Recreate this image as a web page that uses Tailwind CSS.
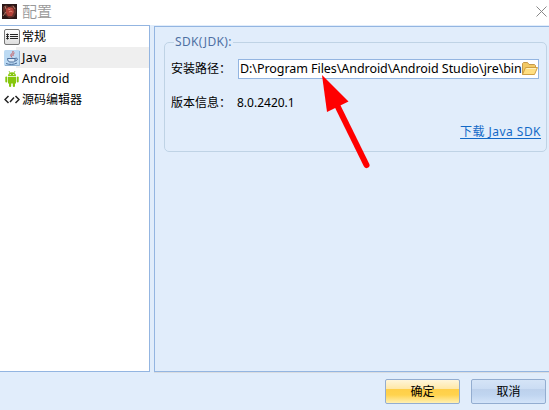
<!DOCTYPE html>
<html lang="zh-CN">
<head>
<meta charset="utf-8">
<title>配置</title>
<script src="https://cdn.jsdelivr.net/npm/@tailwindcss/browser@4"></script>
</head>
<body class="w-[549px] h-[410px] overflow-hidden bg-[#e1edfb] text-black text-[13px] leading-[20px] whitespace-nowrap font-['Noto_Sans','Noto_Sans_CJK_SC',sans-serif] flex flex-col">
<header class="h-[25px] shrink-0 bg-white flex items-center pl-[2px] pr-[2px]">
  <svg class="w-[15px] h-[15px] mb-[3px]" viewBox="0 0 15 15">
    <rect width="15" height="15" fill="#2a1717"/>
    <path d="M1 3l3-2 3 2 4-2 3 3v5l-2 4-5 1-4-3-2-4z" fill="#62302a"/>
    <path d="M4 5l3-2 4 1 1 4-2 4-4 0-2-3z" fill="#b34038"/>
    <path d="M6 5l2 .5 1-1M7 8l2-1 1.500 1" stroke="#e58a75" fill="none"/>
    <path d="M1 12l3-4M11 2l2 3M3 2l1 3" stroke="#a77867" fill="none"/>
  </svg>
  <h1 class="ml-[5px] mb-[4px] text-[15px] font-[350] text-[#999]">配置</h1>
  <svg class="ml-auto mb-[3px] w-[11px] h-[11px]" viewBox="0 0 11 11"><path d="M.5.5l10 10M10.5.5l-10 10" stroke="#888" fill="none"/></svg>
</header>
<main class="h-[347px] shrink-0 flex">
  <nav class="w-[150px] shrink-0 bg-white border border-l-0 border-[#93b5e1]">
    <div class="h-[21px] flex items-center pl-[4px] gap-[2px]">
      <svg class="w-4 h-4" viewBox="0 0 16 16"><defs><linearGradient id="g" x2="0" y2="1"><stop stop-color="#fff"/><stop offset="1" stop-color="#ddd"/></linearGradient></defs><rect x=".5" y=".5" width="15" height="15" rx="1.500" fill="url(#g)" stroke="#777"/><path d="M6 5.500h8M6 7.500h8M6 9.500h8" stroke="#222"/><path d="M2 5.500h3M2 7.500h3M2 9.500h3" stroke="#444"/><path d="M3.500 4.500v6" stroke="#222"/></svg>
      <span class="text-[12px]">常规</span>
    </div>
    <div class="h-[21px] flex items-center pl-[4px] bg-[linear-gradient(to_right,white_16px,#efefef_16px)]">
      <svg class="w-4 h-4" viewBox="0 0 16 16"><rect width="16" height="16" rx="1.5" fill="#bcdaf3"/><path d="M15.500 1v14.500H1" fill="none" stroke="#90b3d3"/><path d="M9 1c1 2-3 3-2 5 .2.800 1 1 1 1.500M10.500 3c-2 1-1.500 2-1.500 3" fill="none" stroke="#c84c4c"/><path d="M3.500 8.500h7.500v1.500c0 1.500-1 2-2 2H6c-1.500 0-2.500-1.500-2.500-3.500z" fill="#dcebfa" stroke="#4c6f9b"/><path d="M11 8.500c2-1 3 .500 2 1.500s-2 1-2 1M2 13.500c3 1.300 8 1.300 11-.5" fill="none" stroke="#4c6f9b"/></svg>
      <span class="ml-[2px] text-[12.500px] tracking-[.35px]">Java</span>
    </div>
    <div class="h-[21px] flex items-center pl-[4px] gap-[2px]">
      <svg class="w-4 h-4" viewBox="0 0 16 16"><g fill="#86c70c"><path d="M4 5c0-5 8-5 8 0zM4 5.800h8V12.500H4z"/><rect x="1.300" y="5.500" width="2" height="6" rx="1"/><rect x="12.700" y="5.500" width="2" height="6" rx="1"/><rect x="5" y="11" width="2.200" height="5" rx="1"/><rect x="8.800" y="11" width="2.200" height="5" rx="1"/></g><path d="M5 0l1 2M11 0l-1 2" stroke="#86c70c" stroke-width=".8"/><circle cx="6.300" cy="3.500" r=".6" fill="#fff"/><circle cx="9.700" cy="3.500" r=".6" fill="#fff"/></svg>
      <span class="text-[12.500px] tracking-[.1px]">Android</span>
    </div>
    <div class="h-[21px] flex items-center pl-[4px] gap-[2px]">
      <svg class="w-4 h-4" viewBox="0 0 16 16"><path d="M4.500 4L1 7.500 4.500 11M11.500 4L15 7.500 11.500 11M10 5.500l-4 4.500" stroke="#222" stroke-width="1.500" fill="none"/></svg>
      <span class="text-[12px]">源码编辑器</span>
    </div>
  </nav>
  <section class="ml-[4px] mt-px flex-1 border-l border-y border-[#93b5e1] shadow-[0_1px_0_#d9dce0] pl-[9px]">
    <fieldset class="mt-[6px] w-[383px] h-[119px] border border-[#bfd3e5] rounded-[5px]">
      <legend class="ml-[9px] h-[19px] px-px text-[12px] tracking-[.35px] leading-[18px] text-[#4f70a3]">SDK(JDK):</legend>
      <div class="flex items-center pl-[6px] h-[20px] mt-[7px]">
        <label class="w-[67px] text-[12px]">安装路径：</label>
        <div class="w-[301px] h-[20px] border border-[#93b5e1] bg-white flex items-center pl-[1px]">
          <span class="w-[282px] overflow-hidden text-[12.500px] tracking-[-.06px]">D:\Program Files\Android\Android Studio\jre\bin</span>
          <svg class="w-4 h-4 shrink-0" viewBox="0 0 16 16"><path d="M.500 13.500v-11l1-1h4l1.500 2h5.500l1 1V7" fill="#f2c964" stroke="#c69a4d"/><path d="M.500 13.500L3.500 6.500h12l-3 7z" fill="#ffdf82" stroke="#d0a044"/><path d="M4.500 7.500h9.500" stroke="#fff2bd"/></svg>
        </div>
      </div>
      <div class="flex items-center pl-[6px] h-[20px] mt-[14px]">
        <span class="w-[66px] text-[12px]">版本信息：</span><span class="text-[12px]">8.0.2420.1</span>
      </div>
      <div class="flex justify-end pr-[5px] mt-[10px]"><a class="text-[12px] tracking-[.46px] leading-[17px] h-[15px] text-[#1269c7] underline underline-offset-2">下载 Java SDK</a></div>
    </fieldset>
  </section>
</main>
<footer class="flex-1 flex justify-end pt-[7px] pr-[3px] gap-[11px]">
  <button class="w-[75px] h-[25px] rounded-[2px] border border-[#93add0] text-[12px] bg-[linear-gradient(#fff5d9_0%,#ffe7a5_40%,#ffcf48_41%,#ffd34e_65%,#fff0b3_100%)]">确定</button>
  <button class="w-[75px] h-[25px] rounded-[2px] border border-[#93add0] text-[12px] bg-[linear-gradient(#d5e4f7_0%,#cadcf3_40%,#bdd1ec_41%,#c0d5f0_65%,#d3e4f9_100%)]">取消</button>
</footer>
<svg class="absolute left-[315px] top-[68px] w-[60px] h-[105px] pointer-events-none" viewBox="0 0 60 105"><path d="M7 7L33.500 33.500 12 44z" fill="#f00"/><path d="M22 37L51.500 97" stroke="#f00" stroke-width="6" stroke-linecap="round"/></svg>
</body>
</html>
